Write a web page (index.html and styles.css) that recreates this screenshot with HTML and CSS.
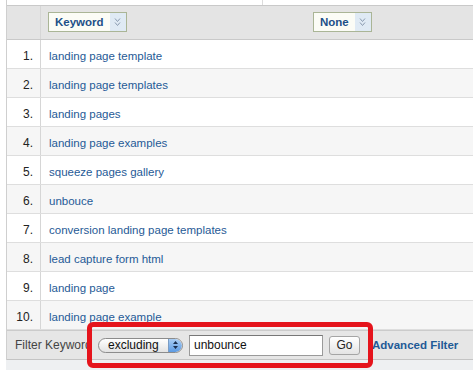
FILE: index.html
```html
<!DOCTYPE html>
<html lang="en">
<head>
    <meta charset="UTF-8">
    <title>Keyword report</title>
    <link rel="stylesheet" href="styles.css">
</head>
<body>

    <div class="top-strip"><div class="top-cell"></div></div>

    <div class="report">

        <div class="row head">
            <div class="num"></div>
            <div class="col-kw">
                <span class="pick">Keyword<span class="pick-arrow"><svg width="7" height="10" viewBox="0 0 7 10"><path d="M1 1.5 L3.5 4.5 L6 1.5 M1 5.5 L3.5 8.5 L6 5.5" fill="none" stroke="#8a9bb0" stroke-width="1"/></svg></span></span>
            </div>
            <div class="col-dim">
                <span class="pick">None<span class="pick-arrow"><svg width="7" height="10" viewBox="0 0 7 10"><path d="M1 1.5 L3.5 4.5 L6 1.5 M1 5.5 L3.5 8.5 L6 5.5" fill="none" stroke="#8a9bb0" stroke-width="1"/></svg></span></span>
            </div>
        </div>

        <div class="row"><div class="num">1.</div><div class="col-kw"><a href="#">landing page template</a></div><div class="col-dim"></div></div>
        <div class="row alt"><div class="num">2.</div><div class="col-kw"><a href="#">landing page templates</a></div><div class="col-dim"></div></div>
        <div class="row"><div class="num">3.</div><div class="col-kw"><a href="#">landing pages</a></div><div class="col-dim"></div></div>
        <div class="row alt"><div class="num">4.</div><div class="col-kw"><a href="#">landing page examples</a></div><div class="col-dim"></div></div>
        <div class="row"><div class="num">5.</div><div class="col-kw"><a href="#">squeeze pages gallery</a></div><div class="col-dim"></div></div>
        <div class="row alt"><div class="num">6.</div><div class="col-kw"><a href="#">unbouce</a></div><div class="col-dim"></div></div>
        <div class="row"><div class="num">7.</div><div class="col-kw"><a href="#">conversion landing page templates</a></div><div class="col-dim"></div></div>
        <div class="row alt"><div class="num">8.</div><div class="col-kw"><a href="#">lead capture form html</a></div><div class="col-dim"></div></div>
        <div class="row"><div class="num">9.</div><div class="col-kw"><a href="#">landing page</a></div><div class="col-dim"></div></div>
        <div class="row alt"><div class="num">10.</div><div class="col-kw"><a href="#">landing page example</a></div><div class="col-dim"></div></div>

        <div class="filter-bar">
            <span class="filter-label">Filter Keyword</span>
            <span class="popup">excluding<span class="stepper"><svg width="7" height="10" viewBox="0 0 7 10"><path d="M3.5 1 L6 4 L1 4 Z M3.5 9 L6 6 L1 6 Z" fill="#1b2f4e"/></svg></span></span>
            <span class="text-field">unbounce</span>
            <span class="go">Go</span>
            <a class="adv" href="#">Advanced Filter</a>
        </div>

    </div>

    <div class="bottom-strip"></div>

    <div class="highlight"></div>

</body>
</html>
```

FILE: styles.css
```css
* {
    margin: 0px;
    padding: 0px;
    box-sizing: border-box;
}
body {
    width: 473px;
    height: 370px;
    overflow: hidden;
    background-color: #ffffff;
    font-family: "Liberation Sans", Arial, sans-serif;
    font-size: 11.5px;
    color: #333333;
}
a {
    color: #1f5a96;
    text-decoration: none;
}
.top-strip {
    height: 5px;
    margin-left: 6px;
    border-left: 1px solid #cfcfcf;
}
.top-cell {
    width: 256px;
    height: 100%;
    border-right: 1px solid #dcdcdc;
}
.report {
    margin-left: 6px;
    border-left: 1px solid #cfcfcf;
}
.row {
    display: grid;
    grid-template-columns: 34px 265px 1fr;
    height: 29px;
    border-bottom: 1px solid #dedede;
}
.row.alt {
    background-color: #f6f6f6;
}
.row.head {
    height: 35px;
    background-color: #e4e4e4;
    border-top: 1px solid #c9c9c9;
    border-bottom: 1px solid #c9c9c9;
}
.num {
    border-right: 1px solid #d6d6d6;
    padding-right: 7px;
    padding-top: 4px;
    display: flex;
    align-items: center;
    justify-content: flex-end;
    font-size: 12px;
    color: #222222;
}
.col-kw, .col-dim {
    display: flex;
    align-items: center;
    padding-left: 8px;
    padding-top: 4px;
}
.head .col-kw, .head .col-dim {
    padding-left: 7px;
    padding-top: 0px;
    padding-bottom: 1px;
}
.pick {
    display: flex;
    align-items: stretch;
    height: 20px;
    border: 1px solid #aab596;
    background-color: #fbfcf6;
    font-weight: bold;
    color: #1d4f88;
    line-height: 18px;
    padding-left: 6px;
}
.pick-arrow {
    display: flex;
    align-items: center;
    justify-content: center;
    width: 16px;
    margin-left: 6px;
    background-color: #dfeaf4;
}
.filter-bar {
    display: flex;
    align-items: center;
    height: 30px;
    background-color: #e6e6e6;
    border-top: 1px solid #cbcbcb;
    border-bottom: 1px solid #c4c4c4;
    padding-left: 8px;
    font-size: 12px;
}
.filter-label {
    width: 83px;
    color: #444444;
    white-space: nowrap;
    overflow: hidden;
}
.popup {
    display: flex;
    align-items: center;
    width: 85px;
    height: 15px;
    border: 1px solid #8c8c8c;
    border-radius: 8px;
    background: linear-gradient(#ffffff, #e2e2e2);
    padding-left: 9px;
    color: #111111;
    line-height: 13px;
    overflow: hidden;
}
.stepper {
    display: flex;
    align-items: center;
    justify-content: center;
    width: 14px;
    height: 100%;
    margin-left: auto;
    border-radius: 0 7px 7px 0;
    background: linear-gradient(#a9cdf3, #5d9be3);
    border-left: 1px solid #7a9cc4;
}
.text-field {
    display: flex;
    align-items: center;
    width: 134px;
    height: 21px;
    margin-left: 6px;
    border: 1px solid #9a9a9a;
    border-top-color: #777777;
    background-color: #ffffff;
    padding-left: 4px;
    color: #111111;
}
.go {
    display: flex;
    align-items: center;
    justify-content: center;
    width: 31px;
    height: 19px;
    margin-left: 6px;
    border: 1px solid #a5a5a5;
    border-radius: 3px;
    background: linear-gradient(#ffffff, #e4e4e4);
    color: #222222;
}
.adv {
    margin-left: 12px;
    font-weight: bold;
    font-size: 11.5px;
    color: #1f5a96;
}
.bottom-strip {
    height: 10px;
    margin-left: 6px;
    background-color: #eef0f2;
}
.highlight {
    position: absolute;
    left: 87px;
    top: 322px;
    width: 286px;
    height: 46px;
    border: 5px solid #e5141c;
    border-radius: 6px;
}
```
